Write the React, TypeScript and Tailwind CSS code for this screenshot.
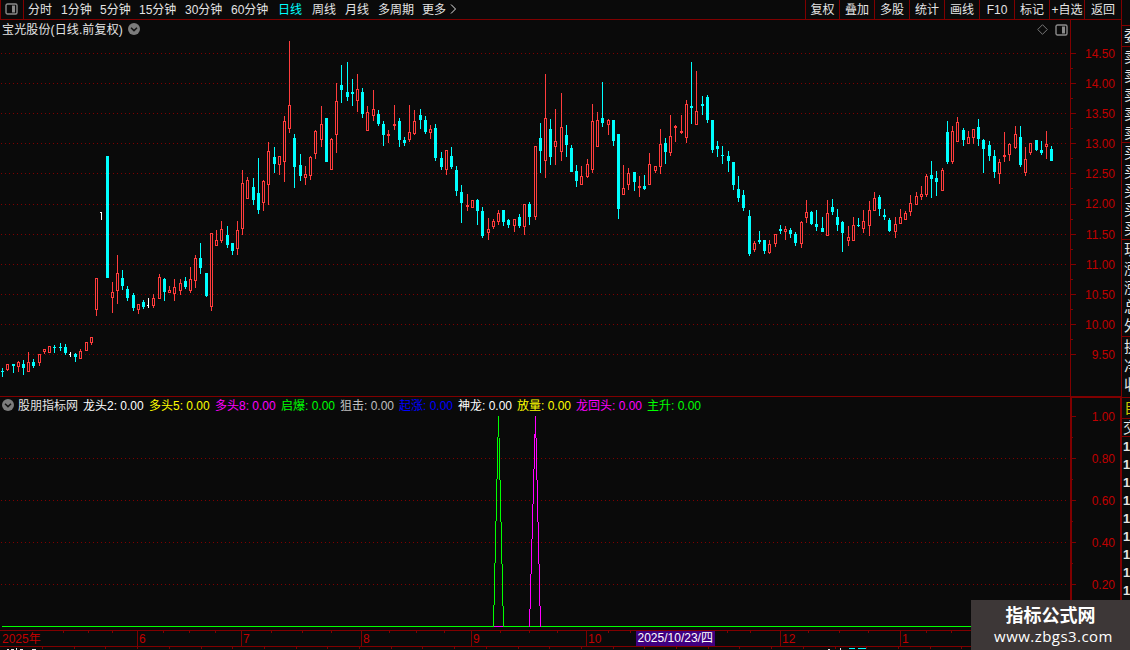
import { clsx } from "clsx";

type Candle = [x: number, high: number, top: number, bottom: number, low: number, kind: "u" | "d" | "w"];

const UP = "#ff3c3c";
const DOWN = "#00ffff";
const LINE = "#800000";
const BG = "#0a0a0a";

const CANDLES: Candle[] = [
  [2, 368, 371, 372, 377, "d"], [7, 364, 364, 370, 371, "u"], [13, 364, 364, 366, 373, "d"], [18, 361, 362, 367, 372, "u"],
  [23, 360, 364, 368, 375, "d"], [28, 352, 362, 372, 372, "u"], [33, 359, 362, 366, 368, "d"], [39, 354, 354, 363, 366, "u"],
  [44, 349, 349, 352, 354, "u"], [49, 346, 346, 353, 353, "u"], [54, 345, 347, 348, 353, "d"], [60, 343, 347, 348, 351, "d"],
  [65, 344, 347, 353, 355, "d"], [70, 352, 354, 355, 357, "w"], [75, 353, 354, 357, 362, "d"], [80, 349, 351, 359, 359, "u"],
  [86, 342, 342, 351, 351, "u"], [91, 337, 337, 343, 345, "u"], [96, 278, 278, 310, 316, "u"], [101, 212, 212, 213, 220, "w"],
  [107, 156, 156, 278, 278, "d"], [112, 282, 292, 298, 313, "u"], [117, 255, 273, 291, 304, "u"], [122, 270, 278, 286, 290, "d"],
  [127, 286, 289, 298, 301, "d"], [133, 293, 295, 308, 311, "d"], [138, 304, 304, 310, 314, "u"], [143, 300, 302, 307, 309, "d"],
  [148, 298, 305, 306, 308, "w"], [153, 294, 298, 306, 308, "u"], [159, 274, 277, 299, 299, "u"], [164, 278, 279, 292, 301, "d"],
  [169, 286, 290, 293, 293, "u"], [174, 279, 287, 294, 301, "u"], [180, 279, 283, 291, 295, "u"], [185, 277, 281, 287, 289, "d"],
  [190, 267, 279, 291, 293, "u"], [195, 255, 258, 281, 288, "u"], [200, 243, 258, 268, 274, "d"], [206, 273, 273, 296, 297, "d"],
  [211, 233, 233, 307, 311, "u"], [216, 230, 240, 246, 246, "u"], [221, 221, 229, 241, 243, "u"], [227, 226, 235, 245, 248, "d"],
  [232, 243, 243, 251, 255, "d"], [237, 221, 230, 249, 255, "u"], [242, 170, 183, 229, 235, "u"], [247, 177, 180, 199, 199, "u"],
  [253, 178, 187, 200, 205, "d"], [258, 158, 193, 210, 214, "d"], [263, 180, 181, 203, 211, "u"], [268, 142, 151, 185, 205, "u"],
  [274, 147, 157, 164, 173, "d"], [279, 156, 156, 165, 175, "u"], [284, 116, 121, 162, 182, "u"], [289, 41, 105, 129, 133, "u"],
  [294, 134, 138, 167, 188, "d"], [300, 154, 165, 176, 181, "d"], [305, 166, 174, 178, 185, "u"], [310, 156, 157, 176, 180, "u"],
  [315, 130, 131, 154, 159, "u"], [321, 106, 124, 140, 147, "u"], [326, 118, 118, 162, 162, "d"], [331, 138, 139, 170, 170, "u"],
  [336, 83, 101, 135, 153, "u"], [341, 65, 85, 90, 103, "d"], [347, 62, 92, 97, 101, "d"], [352, 79, 92, 94, 106, "d"],
  [357, 74, 89, 101, 112, "u"], [362, 88, 92, 114, 118, "d"], [367, 106, 112, 131, 131, "u"], [373, 90, 109, 116, 121, "u"],
  [378, 110, 114, 124, 126, "d"], [383, 121, 124, 135, 146, "d"], [388, 130, 134, 136, 143, "u"], [394, 105, 124, 126, 130, "u"],
  [399, 118, 121, 140, 147, "d"], [404, 137, 140, 143, 146, "d"], [409, 105, 132, 140, 142, "u"], [414, 110, 121, 134, 135, "u"],
  [420, 109, 115, 120, 129, "d"], [425, 116, 120, 132, 134, "d"], [430, 125, 129, 133, 139, "u"], [435, 124, 128, 158, 161, "d"],
  [441, 152, 158, 167, 170, "d"], [446, 150, 150, 170, 175, "u"], [451, 147, 156, 167, 169, "d"], [456, 166, 170, 191, 196, "d"],
  [461, 185, 192, 203, 223, "d"], [467, 194, 205, 207, 211, "u"], [472, 200, 200, 208, 208, "u"], [477, 199, 200, 211, 225, "d"],
  [482, 207, 211, 236, 238, "d"], [488, 218, 229, 233, 240, "u"], [493, 219, 221, 227, 229, "u"], [498, 210, 213, 222, 225, "u"],
  [503, 210, 210, 222, 226, "d"], [508, 219, 220, 225, 228, "d"], [514, 219, 219, 226, 232, "u"], [519, 214, 217, 226, 228, "d"],
  [524, 204, 204, 227, 235, "u"], [529, 202, 204, 217, 225, "d"], [535, 146, 146, 217, 220, "u"], [540, 123, 138, 151, 173, "d"],
  [545, 74, 118, 161, 178, "u"], [550, 119, 129, 157, 165, "d"], [555, 109, 141, 147, 165, "u"], [561, 93, 127, 152, 161, "u"],
  [566, 125, 135, 145, 157, "d"], [571, 145, 148, 172, 172, "d"], [576, 165, 171, 181, 187, "d"], [581, 166, 176, 185, 185, "u"],
  [587, 159, 164, 177, 178, "u"], [592, 104, 121, 170, 173, "u"], [597, 112, 120, 147, 147, "u"], [602, 82, 118, 123, 127, "d"],
  [608, 119, 120, 125, 135, "u"], [613, 120, 120, 141, 146, "d"], [618, 134, 134, 209, 219, "d"], [623, 165, 188, 195, 195, "u"],
  [628, 168, 173, 185, 190, "u"], [634, 172, 172, 182, 191, "d"], [639, 176, 186, 188, 197, "u"], [644, 175, 186, 189, 190, "d"],
  [649, 153, 164, 185, 185, "u"], [655, 166, 166, 171, 173, "u"], [660, 129, 144, 167, 174, "u"], [665, 138, 143, 152, 164, "d"],
  [670, 115, 136, 153, 156, "u"], [675, 125, 126, 128, 142, "u"], [681, 115, 131, 133, 134, "u"], [686, 100, 104, 138, 143, "u"],
  [691, 62, 106, 108, 124, "d"], [696, 71, 111, 125, 125, "u"], [702, 96, 104, 106, 115, "d"], [707, 95, 97, 120, 123, "d"],
  [712, 120, 120, 150, 153, "d"], [717, 141, 146, 149, 157, "d"], [722, 146, 155, 156, 164, "d"], [728, 151, 156, 161, 172, "d"],
  [733, 162, 162, 185, 190, "d"], [738, 176, 189, 198, 202, "d"], [743, 190, 195, 208, 211, "d"], [749, 210, 216, 254, 256, "d"],
  [754, 241, 243, 250, 252, "u"], [759, 231, 240, 242, 244, "d"], [764, 240, 240, 251, 254, "d"], [769, 240, 244, 253, 254, "u"],
  [775, 234, 234, 244, 247, "u"], [780, 225, 229, 231, 234, "d"], [785, 226, 229, 232, 240, "u"], [790, 228, 230, 234, 238, "d"],
  [795, 232, 234, 243, 246, "d"], [801, 221, 222, 244, 248, "u"], [806, 200, 212, 218, 223, "u"], [811, 211, 212, 224, 225, "d"],
  [816, 210, 224, 227, 231, "d"], [822, 217, 228, 232, 232, "d"], [827, 200, 213, 236, 236, "u"], [832, 199, 207, 212, 215, "d"],
  [837, 209, 217, 225, 231, "d"], [842, 221, 222, 233, 252, "d"], [848, 226, 237, 241, 246, "u"], [853, 217, 225, 241, 241, "u"],
  [858, 218, 225, 226, 227, "d"], [863, 210, 221, 229, 233, "u"], [869, 201, 210, 226, 236, "u"], [874, 192, 198, 211, 211, "u"],
  [879, 195, 197, 209, 216, "d"], [884, 209, 215, 217, 220, "d"], [889, 218, 220, 231, 232, "d"], [895, 217, 224, 232, 238, "u"],
  [900, 209, 217, 224, 224, "u"], [905, 211, 213, 220, 220, "u"], [910, 195, 203, 212, 216, "u"], [916, 192, 196, 205, 205, "u"],
  [921, 186, 194, 197, 200, "u"], [926, 174, 176, 195, 197, "u"], [931, 161, 175, 179, 198, "d"], [936, 171, 178, 182, 196, "d"],
  [942, 168, 170, 191, 191, "u"], [947, 121, 132, 162, 164, "d"], [952, 126, 131, 162, 164, "u"], [957, 117, 122, 142, 142, "u"],
  [963, 128, 130, 140, 146, "d"], [968, 131, 137, 144, 144, "u"], [973, 129, 129, 138, 144, "u"], [978, 119, 127, 139, 146, "d"],
  [983, 139, 140, 149, 173, "d"], [989, 141, 145, 156, 161, "d"], [994, 150, 156, 172, 178, "d"], [999, 159, 162, 174, 184, "u"],
  [1004, 132, 155, 157, 162, "u"], [1009, 143, 144, 155, 161, "u"], [1015, 126, 134, 148, 149, "u"], [1020, 126, 137, 165, 167, "d"],
  [1025, 147, 159, 173, 176, "u"], [1030, 143, 143, 153, 155, "u"], [1036, 140, 140, 150, 151, "d"], [1041, 141, 150, 153, 155, "d"],
  [1046, 131, 144, 147, 159, "u"], [1051, 146, 149, 161, 161, "d"],
];

const PERIODS = [
  { label: "分时", width: "w-[33px]" },
  { label: "1分钟", width: "w-[39px]" },
  { label: "5分钟", width: "w-[39px]" },
  { label: "15分钟", width: "w-[46px]" },
  { label: "30分钟", width: "w-[46px]" },
  { label: "60分钟", width: "w-[47px]" },
  { label: "日线", width: "w-[34px]", active: true },
  { label: "周线", width: "w-[33px]" },
  { label: "月线", width: "w-[33px]" },
  { label: "多周期", width: "w-[44px]" },
  { label: "更多", width: "w-[27px]" },
];

const TOOLS = [
  { label: "复权", width: "w-[34px]" },
  { label: "叠加", width: "w-[35px]" },
  { label: "多股", width: "w-[35px]" },
  { label: "统计", width: "w-[35px]" },
  { label: "画线", width: "w-[35px]" },
  { label: "F10", width: "w-[35px]" },
  { label: "标记", width: "w-[35px]" },
  { label: "+自选", width: "w-[35px]" },
  { label: "返回", width: "w-[37px]" },
];

const INDICATORS = [
  { label: "龙头2:", width: "w-[66px]", color: "text-white" },
  { label: "多头5:", width: "w-[66px]", color: "text-[#ffff00]" },
  { label: "多头8:", width: "w-[66px]", color: "text-[#ff00ff]" },
  { label: "启爆:", width: "w-[59px]", color: "text-[#00ff00]" },
  { label: "狙击:", width: "w-[59px]", color: "text-[#c0c0c0]" },
  { label: "起涨:", width: "w-[59px]", color: "text-[#0000ff]" },
  { label: "神龙:", width: "w-[59px]", color: "text-white" },
  { label: "放量:", width: "w-[59px]", color: "text-[#ffff00]" },
  { label: "龙回头:", width: "w-[71px]", color: "text-[#ff00ff]" },
  { label: "主升:", width: "w-[59px]", color: "text-[#00ff00]" },
];

const PRICES = ["14.50", "14.00", "13.50", "13.00", "12.50", "12.00", "11.50", "11.00", "10.50", "10.00", "9.50"];
const PRICE_ROWS = [53, 83, 113, 143, 173, 204, 234, 264, 294, 324, 354];
const VALUES = ["1.00", "0.80", "0.60", "0.40", "0.20"];
const VALUE_ROWS = [416, 458, 500, 542, 584];

const MONTHS = [
  { label: "2025年", width: "w-[137px]" },
  { label: "6", width: "w-[104px]" },
  { label: "7", width: "w-[120px]" },
  { label: "8", width: "w-[110px]" },
  { label: "9", width: "w-[115px]" },
  { label: "10", width: "w-[194px]" },
  { label: "12", width: "w-[120px]" },
  { label: "1", width: "w-[221px]" },
];
const MINOR_TICKS = [63, 88, 112, 163, 189, 215, 271, 302, 331, 389, 416, 444, 500, 529, 557, 608, 630, 727, 750, 808, 839, 868, 926, 951];

// quote labels of the side panel, grouped the way the borders split them
const QUOTE_GROUPS = [
  { rows: ["委"], box: "h-[21px]", row: "h-[20px]" },
  { rows: ["卖", "卖", "卖", "卖", "卖"], box: "h-[96px]", row: "h-[19px]" },
  { rows: ["买", "买", "买", "买", "买"], box: "h-[97px]", row: "h-[19px]" },
  { rows: ["现", "涨", "涨", "总", "外"], box: "h-[97px]", row: "h-[19px]" },
  { rows: ["换", "净", "收"], box: "h-[61px]", row: "h-[19px]" },
];

// staircase column pixels of one side of a spike
const spike = (from: number, step: number, edges: number[]) =>
  edges.slice(0, -1).map((y, i) => ({ x: from + step * i, y, h: edges[i + 1] - y }));

const GREEN_SPIKE = [
  ...spike(498, -1, [416, 437, 479, 521, 563, 605, 627]),
  ...spike(499, 1, [438, 480, 522, 564, 606, 627]),
];
const MAGENTA_SPIKE = [
  ...spike(535, -1, [416, 434, 469, 504, 539, 574, 609, 627]),
  ...spike(535, 1, [416, 438, 480, 522, 564, 606, 627]),
];

function PanelIcon() {
  return (
    <svg width="13" height="12" viewBox="0 0 13 12" className="shrink-0">
      <rect x="1" y="1" width="11" height="10" rx="1.5" fill="none" stroke="#8a8a8a" strokeWidth="1.4" />
      <rect x="7" y="2.5" width="3" height="7" fill="#8a8a8a" />
    </svg>
  );
}

function ChevronDot() {
  return (
    <svg width="12" height="12" viewBox="0 0 12 12" className="shrink-0">
      <circle cx="6" cy="6" r="6" fill="#7c7c7c" />
      <path d="M3 4.8 L6 7.6 L9 4.8" fill="none" stroke="#141414" strokeWidth="1.5" />
    </svg>
  );
}

function GridRows({ rows }: { rows: number[] }) {
  return (
    <>
      {rows.map((y) => (
        <line key={y} x1="1" x2="1068" y1={y + 0.5} y2={y + 0.5} stroke={LINE} strokeDasharray="1 3" />
      ))}
    </>
  );
}

function CandleMark({ candle }: { candle: Candle }) {
  const [x, high, top, bottom, low, kind] = candle;
  if (kind === "w") {
    return (
      <g fill="#ffffff">
        <rect x={x} y={high} width="1" height={low - high} />
        <rect x={x - 1} y={top} width="1" height="1" />
      </g>
    );
  }
  return (
    <g fill={kind === "u" ? UP : DOWN}>
      <rect x={x} y={high} width="1" height={low - high} />
      <rect x={x - 1} y={top} width="3" height={bottom - top} />
      {kind === "u" && bottom - top > 2 && <rect x={x} y={top + 1} width="1" height={bottom - top - 2} fill={BG} />}
    </g>
  );
}

function Toolbar() {
  return (
    <div className="flex h-5 shrink-0 border-b border-[#800000] leading-[18px]">
      <div className="flex w-6 shrink-0 items-start justify-center border-x border-[#800000] pr-px pt-[3px]">
        <PanelIcon />
      </div>
      <div className="flex flex-1 items-start pl-1 pt-px text-[#e4e4e4]">
        {PERIODS.map((p) => (
          <button key={p.label} className={clsx("shrink-0 whitespace-nowrap text-left", p.width, p.active && "text-[#00ffff]")}>
            {p.label}
          </button>
        ))}
        <svg width="9" height="16" viewBox="0 0 9 16">
          <path d="M2 3.5 L6.5 8 L2 12.5" fill="none" stroke="#e4e4e4" />
        </svg>
      </div>
      {TOOLS.map((t) => (
        <button
          key={t.label}
          className={clsx("shrink-0 whitespace-nowrap border-l border-[#800000] pt-px text-center text-[#e4e4e4]", t.width)}
        >
          {t.label}
        </button>
      ))}
    </div>
  );
}

function PricePanel() {
  return (
    <div className="flex h-[376px] shrink-0">
      <div className="w-[1070px]">
        <div className="flex h-5 items-start justify-between pr-[2px]">
          <div className="flex items-start gap-[5px] pl-[2px] leading-[20px] text-[#e4e4e4]">
            <span className="tracking-[0.13px]">宝光股份(日线.前复权)</span>
            <div className="pt-[3px]">
              <ChevronDot />
            </div>
          </div>
          <div className="flex h-[19px] items-center gap-[7px]">
            <svg width="11" height="11" viewBox="0 0 11 11">
              <path d="M5.5 0.7 L10.3 5.5 L5.5 10.3 L0.7 5.5 Z" fill="none" stroke="#777777" />
            </svg>
            <PanelIcon />
          </div>
        </div>
        <svg width="1070" height="356" viewBox="0 40 1070 356" shapeRendering="crispEdges" className="block">
          <GridRows rows={PRICE_ROWS} />
          {CANDLES.map((c) => (
            <CandleMark key={c[0]} candle={c} />
          ))}
        </svg>
      </div>
      <div className="flex w-[51px] border-l border-[#800000]">
        <svg width="6" height="376" viewBox="0 20 6 376" shapeRendering="crispEdges" className="block" fill={LINE}>
          {PRICE_ROWS.map((y) => (
            <g key={y}>
              <rect x="0" y={y} width="5" height="1" />
              {y < 354 && <rect x="0" y={y + 15} width="2" height="1" />}
            </g>
          ))}
        </svg>
        <div className="flex-1 pr-[6px] pt-[19px] text-right text-[#c00000]">
          {PRICES.map((p) => (
            <div key={p} className="h-[30.1px] leading-[30px]">
              {p}
            </div>
          ))}
        </div>
      </div>
    </div>
  );
}

function IndicatorPanel() {
  return (
    <div className="flex h-[234px] shrink-0 border-t border-[#800000]">
      <div className="w-[1070px]">
        <div className="flex h-[17px] items-start pl-[2px] leading-[18px]">
          <div className="pt-[2px]">
            <ChevronDot />
          </div>
          <span className="ml-[4px] w-[65px] shrink-0 text-[#e4e4e4]">股朋指标网</span>
          {INDICATORS.map((item) => (
            <span key={item.label} className={clsx("shrink-0 whitespace-nowrap", item.width, item.color)}>
              {item.label} 0.00
            </span>
          ))}
        </div>
        <svg width="1070" height="216" viewBox="0 414 1070 216" shapeRendering="crispEdges" className="block">
          <GridRows rows={VALUE_ROWS.slice(1)} />
          <rect x="2" y="626" width="1068" height="1" fill="#00ff00" />
          {MAGENTA_SPIKE.map((r, i) => (
            <rect key={i} x={r.x} y={r.y} width="1" height={r.h} fill="#ff00ff" />
          ))}
          <rect x="494" y="626" width="9" height="1" fill="#ff00ff" />
          {GREEN_SPIKE.map((r, i) => (
            <rect key={i} x={r.x} y={r.y} width="1" height={r.h} fill="#00ff00" />
          ))}
        </svg>
      </div>
      <div className="flex w-[51px] border-l-2 border-r border-t border-[#800000]">
        <svg width="5" height="232" viewBox="0 398 5 232" shapeRendering="crispEdges" className="block" fill={LINE}>
          {VALUE_ROWS.map((y) => (
            <g key={y}>
              <rect x="0" y={y} width="4" height="1" />
              <rect x="0" y={y + 21} width="1" height="1" />
            </g>
          ))}
        </svg>
        <div className="flex-1 pr-[5px] text-right text-[#c00000]">
          {VALUES.map((v, i) => (
            <div key={v} className={clsx(i === 0 ? "h-[40px] leading-[38px]" : "h-[42px] leading-[42px]")}>
              {v}
            </div>
          ))}
        </div>
      </div>
    </div>
  );
}

function TimeAxis() {
  return (
    <div className="relative h-[17px] shrink-0 border-y border-[#800000] text-[#c00000]">
      <div className="flex h-full leading-[16px]">
        {MONTHS.map((m, i) => (
          <div key={m.label} className={clsx("shrink-0 whitespace-nowrap", m.width, i === 0 ? "pl-[2px]" : "border-l border-[#800000] pl-px")}>
            {m.label}
          </div>
        ))}
      </div>
      <svg width="1121" height="3" className="absolute left-0 top-0" fill={LINE} shapeRendering="crispEdges">
        {MINOR_TICKS.map((x) => (
          <rect key={x} x={x} y="0" width="1" height="2" />
        ))}
      </svg>
      <div className="absolute left-[636px] top-0 h-[15px] w-[79px] whitespace-nowrap bg-[#400080] pl-[1.5px] leading-[15px] text-white">
        2025/10/23/四
      </div>
    </div>
  );
}

function QuoteStrip() {
  return (
    <div className="flex w-2 shrink-0 flex-col overflow-hidden text-[15px] text-[#e4e4e4]">
      <div className="h-[25px] shrink-0" />
      {QUOTE_GROUPS.map((g, i) => (
        <div key={i} className={clsx("w-2 shrink-0 overflow-hidden border-t border-[#800000]", g.box)}>
          {g.rows.map((r, j) => (
            <div key={j} className={clsx("w-5 pl-[2px] leading-[19px]", g.row)}>
              {r}
            </div>
          ))}
        </div>
      ))}
      <div className="h-[21px] shrink-0 border-t border-[#800000]">
        <div className="w-5 pl-[2px] leading-[20px] text-[#c8c800]">自</div>
      </div>
      <div className="h-[19px] shrink-0 border-y border-[#800000]">
        <div className="w-5 pl-px leading-[17px]">交</div>
      </div>
      {Array.from({ length: 9 }, (_, i) => (
        <div key={i} className="h-[18px] w-5 shrink-0 pl-px text-[13px] font-bold leading-[20px]">
          1
        </div>
      ))}
    </div>
  );
}

export default function App() {
  return (
    <div className="relative flex h-[650px] w-[1130px] overflow-hidden bg-[#0a0a0a] font-['Liberation_Sans','Noto_Sans_CJK_SC',sans-serif] text-[12px]">
      <div className="flex w-[1121px] shrink-0 flex-col">
        <Toolbar />
        <PricePanel />
        <IndicatorPanel />
        <TimeAxis />
        {/* top edge of the scrolled ticker below the axis */}
        <svg width="1121" height="3" viewBox="0 0 1121 3" shapeRendering="crispEdges" fill={LINE}>
          {Array.from({ length: 30 }, (_, i) => (
            <rect key={i} x={Math.round(42 + i * 31.7)} y="0" width="1" height="2" />
          ))}
          <path d="M7 2h2v1h-2zM11 2h3v1h-3zM16 1h1v2h-1zM20 2h3v1h-3zM32 2h4v1h-4zM828 2h2v1h-2zM840 1h1v2h-1z" fill="#e4e4e4" />
          <path d="M849 1h6v1h-6zM858 1h8v1h-8z" fill="#00ffff" />
        </svg>
      </div>
      <div className="w-px shrink-0 bg-[#800000]" />
      <QuoteStrip />
      <div className="absolute bottom-0 right-0 flex h-[50px] w-[159px] flex-col items-center bg-[#3d3737] font-['Open_Sans','Noto_Sans_CJK_SC',sans-serif] text-white">
        <div className="pt-[4px] text-[18px] font-bold leading-[23px]">指标公式网</div>
        <div className="pl-[6px] text-[15px] leading-[18px] tracking-[0.45px]">www.zbgs3.com</div>
      </div>
    </div>
  );
}
